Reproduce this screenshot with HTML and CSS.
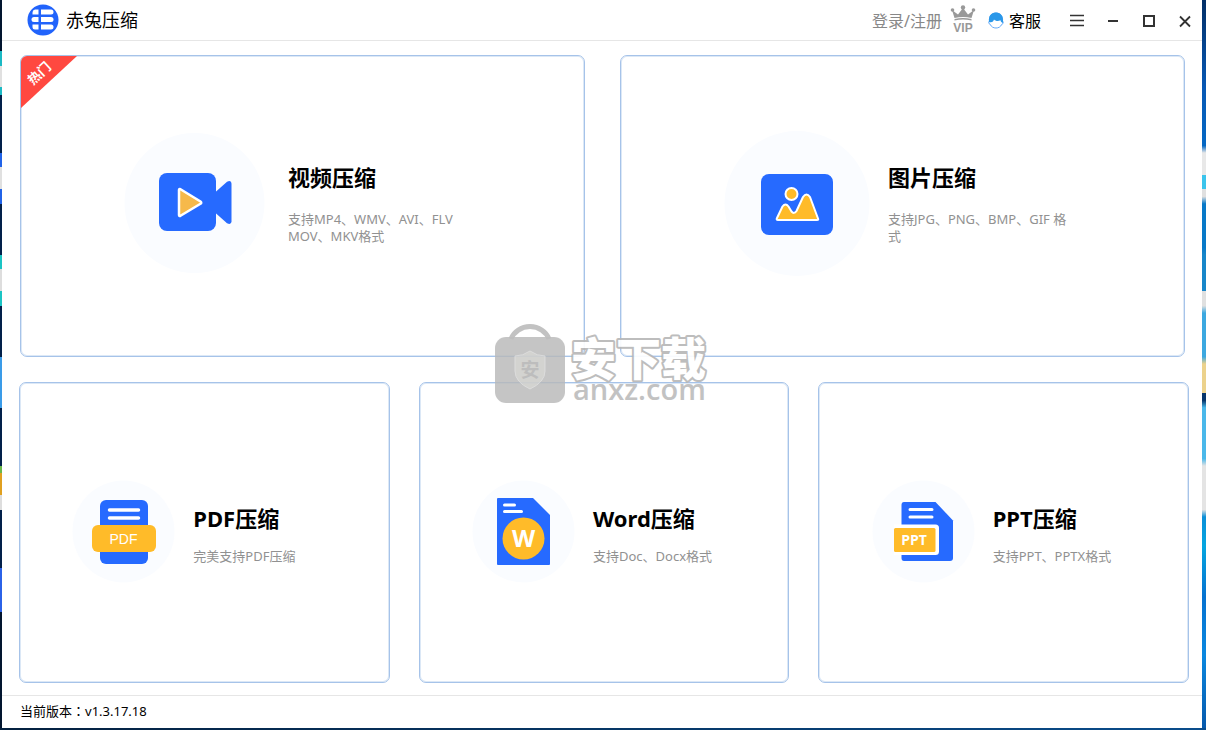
FILE: index.html
```html
<!DOCTYPE html>
<html lang="zh-CN">
<head>
<meta charset="utf-8">
<title>赤兔压缩</title>
<link rel="stylesheet" href="styles.css">
</head>
<body>
<div class="desktop">
  <div class="edge edge-left"></div>
  <div class="window">
    <header class="titlebar">
      <svg class="logo" width="32" height="32" viewBox="0 0 32 32" aria-hidden="true">
        <circle cx="16" cy="16" r="15.5" fill="#2163fb"/>
        <g fill="#fff">
          <path d="M8 5.500h3.500v5H5.500V8.500a3 3 0 0 1 2.500-3z"/>
          <path d="M14 5.500h10a2.500 2.500 0 0 1 2.500 2.500v0a2.500 2.500 0 0 1-2.500 2.500H14z"/>
          <path d="M7 13h4.500v5H7a2.500 2.500 0 0 1 0-5z"/>
          <path d="M14 13h10a2.500 2.500 0 0 1 0 5H14z"/>
          <path d="M5.500 20.500h6v5H8a2.500 2.500 0 0 1-2.500-2.500z"/>
          <path d="M14 20.500h10a2.500 2.500 0 0 1 0 5H14z"/>
        </g>
      </svg>
      <h1 class="app-name">赤兔压缩</h1>
      <nav class="tools">
        <a class="login" href="#">登录/注册</a>
        <button class="icon-button vip" aria-label="VIP">
          <svg width="26" height="30" viewBox="0 0 26 30">
            <g fill="#999">
              <circle cx="13" cy="2.500" r="2.200"/><circle cx="2.500" cy="5" r="1.800"/><circle cx="23.500" cy="5" r="1.800"/>
              <path d="M2 5l6 4.500L13 3l5 6.500L24 5l-2.500 8Q13 11 4.500 13z"/>
              <path d="M4.500 14Q13 12 21.500 14v1.500Q13 13.500 4.500 15.500z"/>
            </g>
            <text class="vip-text" x="13" y="27" text-anchor="middle">VIP</text>
          </svg>
        </button>
        <button class="service">
          <svg width="16" height="17" viewBox="0 0 16 17" aria-hidden="true">
            <path d="M1.500 9C1 4 3.500 1 8 1s7 3.500 6.500 8c1.200 1 .8 3-.6 3.200C12.500 15 10.500 16 8 16s-4.700-1-5.900-3.800C.6 12 .2 10 1.500 9z" fill="#fff" stroke="#64aaf8" stroke-width="1"/>
            <path d="M1 10C.4 4 3 .5 8 .5S15.600 4 15 11c-1.500-.2-2.300-1.500-2.500-2.700-2.500 1.200-5 .8-6.500-.8C5.500 9.500 4 11 1 10z" fill="#2b98e9"/>
          </svg>
          <span>客服</span>
        </button>
        <button class="icon-button menu" aria-label="菜单">
          <svg width="16" height="16" viewBox="0 0 16 16"><path d="M1 2.500h14M1 7.500h14M1 12.500h14" stroke="#333" stroke-width="1.600"/></svg>
        </button>
        <button class="icon-button" aria-label="最小化">
          <svg width="16" height="16" viewBox="0 0 16 16"><path d="M3 8h10" stroke="#333" stroke-width="2"/></svg>
        </button>
        <button class="icon-button" aria-label="最大化">
          <svg width="16" height="16" viewBox="0 0 16 16"><path d="M3 3h10v10H3z" fill="none" stroke="#333" stroke-width="2"/></svg>
        </button>
        <button class="icon-button" aria-label="关闭">
          <svg width="16" height="16" viewBox="0 0 16 16"><path d="M3 3.500l10 10M13 3.500l-10 10" stroke="#333" stroke-width="1.800"/></svg>
        </button>
      </nav>
    </header>

    <main class="content">
      <div class="row row-large">
        <button class="card">
          <span class="ribbon"><span class="ribbon-text">热门</span></span>
          <span class="figure">
            <svg width="146" height="146" viewBox="0 0 146 146" aria-hidden="true">
              <circle cx="70.500" cy="72" r="70" fill="#fafcff"/>
              <rect x="35" y="42" width="57" height="58" rx="8" fill="#266aff"/>
              <path d="M91.500 61l11.500-10.300q4.500-2 4.500 2v37.600q0 4-4.500 2L91.500 82z" fill="#266aff"/>
              <path d="M55 59v25q0 1.500 1.500.8l20-12q1.500-1.200 0-2.300L56.500 58.200q-1.500-.7-1.500.8z" fill="#f6b94b" stroke="#fff" stroke-width="2.500" stroke-linejoin="round"/>
            </svg>
          </span>
          <span class="caption">
            <strong class="title">视频压缩</strong>
            <span class="formats">支持MP4、WMV、AVI、FLV<br>MOV、MKV格式</span>
          </span>
        </button>
        <button class="card">
          <span class="figure">
            <svg width="146" height="146" viewBox="0 0 146 146" aria-hidden="true">
              <circle cx="73" cy="72.500" r="72.500" fill="#fafcff"/>
              <rect x="37" y="43" width="72" height="61" rx="8" fill="#266aff"/>
              <circle cx="67.500" cy="63" r="6" fill="#ffbb29" stroke="#fff" stroke-width="2"/>
              <path d="M53 87l5.500-11.500q3-4 6 0l3 5q2.500 3 5-.5l6.500-14q3.500-5 7 0L94 87.500q.8 1.500-1 1.500H54q-2 0-1-2z" fill="#ffbb29" stroke="#fff" stroke-width="2" stroke-linejoin="round"/>
            </svg>
          </span>
          <span class="caption">
            <strong class="title">图片压缩</strong>
            <span class="formats">支持JPG、PNG、BMP、GIF 格<br>式</span>
          </span>
        </button>
      </div>

      <div class="row row-small">
        <button class="card">
          <span class="figure">
            <svg width="103" height="103" viewBox="0 0 103 103" aria-hidden="true">
              <circle cx="51.500" cy="51.500" r="51" fill="#fafcff"/>
              <rect x="28" y="20" width="48" height="64" rx="6" fill="#266aff"/>
              <path d="M37.500 30h29M37.500 38h29" stroke="#fff" stroke-width="3.500" stroke-linecap="round"/>
              <rect x="20" y="45" width="64" height="27" rx="6" fill="#ffbb29"/>
              <text class="pdf-text" x="51.500" y="64" text-anchor="middle">PDF</text>
            </svg>
          </span>
          <span class="caption">
            <strong class="title">PDF压缩</strong>
            <span class="formats">完美支持PDF压缩</span>
          </span>
        </button>
        <button class="card">
          <span class="figure">
            <svg width="103" height="103" viewBox="0 0 103 103" aria-hidden="true">
              <circle cx="51.500" cy="51.500" r="51" fill="#fafcff"/>
              <path d="M26 18h35l17 17v49q0 1-1 1H26q-1 0-1-1V19q0-1 1-1z" fill="#266aff"/>
              <path d="M32.500 25h10M32.500 31.500h17" stroke="#fff" stroke-width="3" stroke-linecap="round"/>
              <circle cx="51.500" cy="58.500" r="21" fill="#ffbb29"/>
              <text class="word-text" x="51.500" y="67" text-anchor="middle">W</text>
            </svg>
          </span>
          <span class="caption">
            <strong class="title">Word压缩</strong>
            <span class="formats">支持Doc、Docx格式</span>
          </span>
        </button>
        <button class="card">
          <span class="figure">
            <svg width="103" height="103" viewBox="0 0 103 103" aria-hidden="true">
              <circle cx="51.500" cy="51.500" r="51" fill="#fafcff"/>
              <path d="M32 22h31.500l17.500 18.500V78q0 3-3 3H32q-2.500 0-2.500-3V25q0-3 2.500-3z" fill="#266aff"/>
              <path d="M38 29.500h22M38 37h22" stroke="#fff" stroke-width="3" stroke-linecap="round"/>
              <path d="M22 44.500h41.500q3.500 0 3.500 3.500v23.500q0 3.500-3.500 3.500H22z" fill="#fff"/>
              <rect x="22" y="48" width="41.500" height="24" rx="1.500" fill="#ffbb29"/>
              <text class="ppt-text" x="42" y="65" text-anchor="middle">PPT</text>
            </svg>
          </span>
          <span class="caption">
            <strong class="title">PPT压缩</strong>
            <span class="formats">支持PPT、PPTX格式</span>
          </span>
        </button>
      </div>

      <svg class="watermark" width="216" height="92" viewBox="0 0 216 92">
        <path d="M17 16a20 18 0 0 1 38 0" fill="none" stroke="#bdbdbd" stroke-width="5"/>
        <rect x="1" y="14" width="70" height="66" rx="11" fill="#b8b8b8" fill-opacity=".88"/>
        <path d="M36 28q7 5 15 5v15q0 11-15 18-15-7-15-18V33q8 0 15-5z" fill="#d0d0cd" stroke="#dadada"/>
        <text class="shield-text" x="36" y="54" text-anchor="middle">安</text>
        <text class="mark-name" x="77" y="53">安下载</text>
        <text class="mark-domain" x="79" y="77">anxz.com</text>
      </svg>
    </main>

    <footer class="statusbar">当前版本<span class="colon">：</span>v1.3.17.18</footer>
  </div>
  <div class="edge edge-right"></div>
</div>
</body>
</html>
```
FILE: styles.css
```css
* {
  box-sizing: border-box;
}

body {
  margin: 0;
  font-family: "Noto Sans", "Noto Sans CJK SC", sans-serif;
  color: #000;
}

button {
  margin: 0;
  padding: 0;
  border: 0;
  background: none;
  font: inherit;
  color: inherit;
  cursor: pointer;
}

svg {
  display: block;
  flex: none;
}

.desktop {
  display: grid;
  grid-template-columns: 2px 1fr 4px;
  min-height: 100vh;
  padding-bottom: 2px;
  background: linear-gradient(90deg, #04203f, #0a4d8c);
}

.edge-left {
  background: linear-gradient(#02152f 0 7%, #1bb9c4 7% 9%, #e0e0e0 9% 12%, #1bb9c4 12% 13%, #02204a 13% 21%, #2163e8 21% 23%, #e0e0e0 23% 26%, #2163e8 26% 28%, #02204a 28% 35%, #1bc4c4 35% 37%, #ddd 37% 40%, #1bc4c4 40% 42%, #02204a 42% 49%, #3a9be8 49% 56%, #02204a 56% 64%, #6ab84a 64% 65%, #e0a020 65% 68%, #ddd 68% 70%, #02204a 70% 78%, #2b62e8 78% 84%, #02152f 84%);
}

.edge-right {
  background: linear-gradient(#032f66, #0758b4 12%, #0568c4 20%, #e8e8e8 21% 24%, #3bc4ec 24% 26%, #e0e0e0 26% 27%, #0879c8 28% 34%, #1786c9 35% 40%, #e0e0e0 40% 42%, #3ca8e0 43% 49%, #ecd28c 50% 54%, #07356a 54% 55%, #4ab8ea 56% 63%, #e4e4e4 64% 70%, #0b8fd8 71%, #05a6e0 75%, #0672d0 82%, #0b88e0 90%, #0759ac);
}

.window {
  display: flex;
  flex-direction: column;
  min-width: 0;
  background: #fff;
}

.titlebar {
  display: flex;
  align-items: center;
  height: 41px;
  padding: 0 9px 0 25px;
  border-bottom: 1px solid #e6e6e6;
}

.app-name {
  margin: 0 auto 0 7px;
  font-size: 18px;
  font-weight: 400;
  line-height: 24px;
}

.tools {
  display: flex;
  align-items: center;
  gap: 20px;
  padding-top: 1px;
  font-size: 16px;
  line-height: 24px;
}

.login {
  color: #888;
  font-weight: 400;
  text-decoration: none;
}

.vip {
  margin: 0 -8px 0 -12px;
}

.vip svg {
  margin-bottom: 2px;
}

.vip-text {
  font: bold 12px "Liberation Sans", sans-serif;
  fill: #999;
}

.service {
  display: flex;
  align-items: center;
  gap: 5px;
}

.menu {
  margin-left: 8px;
}

.content {
  position: relative;
  display: flex;
  flex: 1;
  flex-direction: column;
  gap: 25px;
  padding: 14px 13px 12px 17px;
}

.row {
  display: grid;
  flex: 1;
}

.row-large {
  grid-template-columns: 1fr 1fr;
  gap: 35px;
  padding: 0 4px 0 1px;
}

.row-small {
  grid-template-columns: repeat(3, 1fr);
  gap: 29px;
}

.card {
  position: relative;
  display: flex;
  align-items: center;
  justify-content: center;
  gap: 18px;
  border: 1px solid #a6c3e9;
  border-radius: 7px;
  box-shadow: inset 0 0 0 1px #dce8f6;
  text-align: left;
}

.row-large .card {
  padding: 0 0 4px 2px;
}

.figure {
  flex: none;
}

.caption {
  display: flex;
  flex-direction: column;
  gap: 19px;
  width: 195px;
}

.row-small .figure {
  padding-bottom: 2px;
}

.row-small .caption {
  gap: 15px;
  width: 143px;
  padding-top: 3px;
}

.title {
  font-size: 22px;
  font-weight: 700;
  line-height: 30px;
}

.formats {
  color: #919191;
  font-size: 13px;
  line-height: 17px;
  white-space: nowrap;
}

.ribbon {
  position: absolute;
  top: 0;
  left: 0;
  width: 56px;
  height: 52px;
  border-top-left-radius: 6px;
  background: #ff4840;
  clip-path: polygon(0 0, 100% 0, 0 100%);
}

.ribbon-text {
  position: absolute;
  top: 8px;
  left: 5px;
  color: #fff;
  font-size: 13px;
  font-weight: 700;
  line-height: 18px;
  transform: rotate(-43deg);
}

.pdf-text {
  font: 14px "Liberation Sans", sans-serif;
  fill: #fff;
}

.word-text {
  font: bold 24px "Open Sans", sans-serif;
  fill: #fff;
}

.ppt-text {
  font: bold 14px "Open Sans", sans-serif;
  fill: #fff;
}

.watermark {
  position: absolute;
  top: calc(50% - 45px);
  left: calc(50% - 108px);
  opacity: .92;
  pointer-events: none;
}

.shield-text {
  font: bold 19px "Noto Sans CJK SC", sans-serif;
  fill: #b8b8b8;
}

.mark-name {
  font: 900 45px "Noto Sans CJK SC", sans-serif;
  fill: #fff;
  stroke: #b8b8b8;
  stroke-width: 4px;
  stroke-linejoin: round;
  paint-order: stroke;
}

.mark-domain {
  font: 600 29px "Open Sans", sans-serif;
  fill: #bdbdbd;
}

.statusbar {
  display: flex;
  align-items: center;
  height: 33px;
  padding: 0 18px 3px;
  border-top: 1px solid #e6e6e6;
  font-size: 13px;
}

.colon {
  font-family: "Noto Sans CJK TC", sans-serif;
}
```
